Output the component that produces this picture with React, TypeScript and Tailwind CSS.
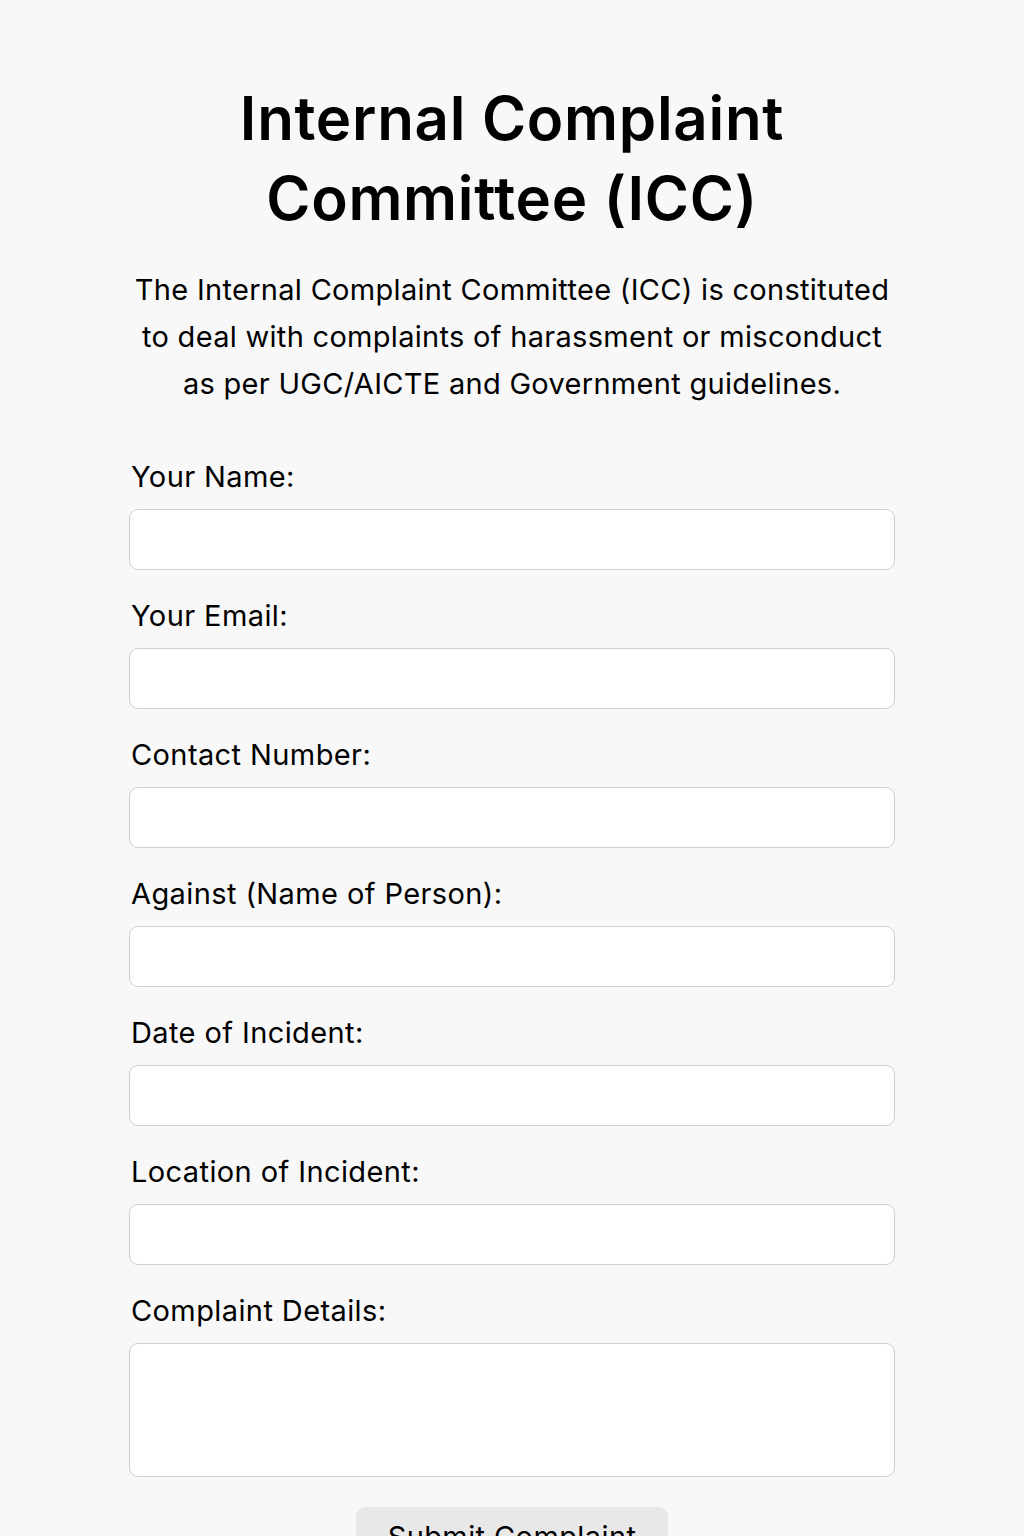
const fields = [
  "Your Name:",
  "Your Email:",
  "Contact Number:",
  "Against (Name of Person):",
  "Date of Incident:",
  "Location of Incident:",
];

function App() {
  return (
    <div className="min-h-screen bg-[#f8f8f8] font-['Inter',sans-serif] text-black">
      <div className="mx-auto w-[766px] pt-[78px]">
        <h1 className="text-center text-[60px] font-semibold leading-[80px] tracking-[0.7px]">
          Internal Complaint
          <br />
          Committee (ICC)
        </h1>
        <p className="-mx-4 mt-[28px] whitespace-nowrap text-center text-[29px] leading-[47px] tracking-[0.3px]">
          The Internal Complaint Committee (ICC) is constituted
          <br />
          to deal with complaints of harassment or misconduct
          <br />
          as per UGC/AICTE and Government guidelines.
        </p>
        <form className="mt-[53px] flex flex-col">
          {fields.map((f) => (
            <div key={f} className="mb-[29px] flex flex-col">
              <label className="mb-[15px] pl-[2px] text-[29px] leading-[34px] tracking-[0.4px]">
                {f}
              </label>
              <input
                type="text"
                className="h-[61px] rounded-[9px] border border-[#cfcfcf] bg-white px-3 outline-none"
              />
            </div>
          ))}
          <div className="flex flex-col">
            <label className="mb-[15px] pl-[2px] text-[29px] leading-[34px] tracking-[0.4px]">
              Complaint Details:
            </label>
            <textarea className="h-[134px] resize-none rounded-[9px] border border-[#cfcfcf] bg-white px-3 outline-none" />
          </div>
          <div className="mt-[30px] flex justify-center pb-10">
            <button
              type="button"
              className="h-[60px] w-[312px] rounded-[9px] bg-[#e8e8e8] text-[29px] tracking-[0.4px]"
            >
              Submit Complaint
            </button>
          </div>
        </form>
      </div>
    </div>
  );
}

export default App;
